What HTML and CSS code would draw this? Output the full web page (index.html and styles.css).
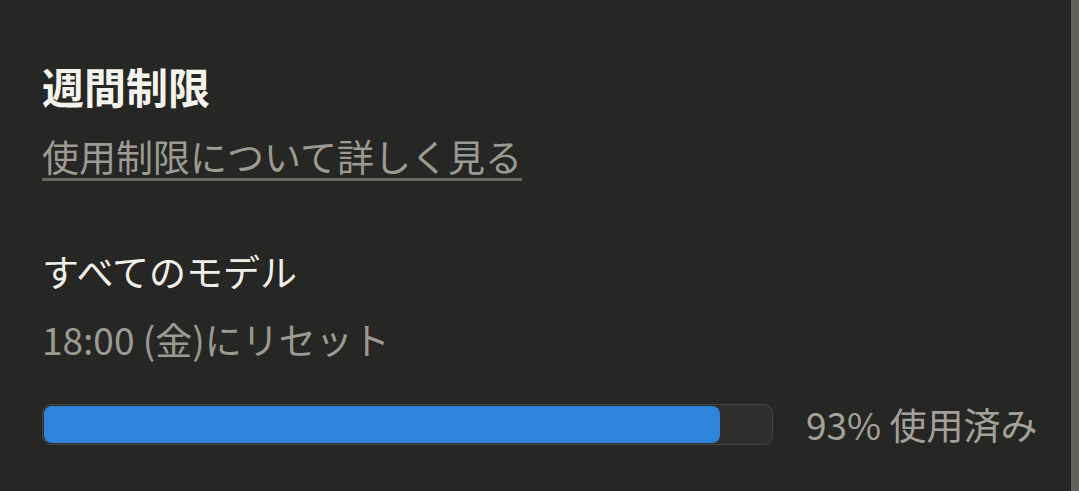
FILE: index.html
```html
<!DOCTYPE html>
<html lang="ja">
<head>
<meta charset="utf-8">
<link rel="stylesheet" href="styles.css">
</head>
<body>
<div class="page">
  <main class="content">
    <section class="section">
      <h2 class="title">週間制限</h2>
      <a class="link" href="#">使用制限について詳しく見る</a>
    </section>
    <section class="usage">
      <div class="model">すべてのモデル</div>
      <div class="reset">18:00 (金)にリセット</div>
      <div class="row">
        <div class="bar"><div class="fill" style="width:93%"></div></div>
        <div class="pct">93% 使用済み</div>
      </div>
    </section>
  </main>
  <div class="scroll"></div>
</div>
</body>
</html>
```
FILE: styles.css
```css
html, body {
  margin: 0;
  padding: 0;
  height: 100%;
  background: #262624;
}
body {
  font-family: "Noto Sans CJK JP", "Noto Sans", sans-serif;
  overflow: hidden;
}
.page {
  display: flex;
  height: 491px;
}
.content {
  flex: 1;
  padding: 60px 34px 0 42px;
  display: flex;
  flex-direction: column;
}
.section {
  display: flex;
  flex-direction: column;
  align-items: flex-start;
}
.title {
  margin: 0;
  font-size: 42px;
  line-height: 52px;
  font-weight: 700;
  color: #f5f4ef;
}
.link {
  margin-top: 23px;
  font-size: 37px;
  line-height: 43px;
  color: #9c9a94;
  text-decoration: none;
  border-bottom: 3px solid #67665f;
}
.usage {
  margin-top: 66px;
  display: flex;
  flex-direction: column;
}
.model {
  font-size: 37px;
  line-height: 48px;
  color: #f0efea;
}
.reset {
  margin-top: 20px;
  font-size: 37px;
  line-height: 48px;
  color: #9c9a94;
}
.row {
  margin-top: 37px;
  display: flex;
  align-items: center;
  gap: 33px;
}
.bar {
  width: 731px;
  height: 41px;
  box-sizing: border-box;
  border: 1.5px solid #454542;
  border-radius: 9px;
  background: #2e2e2c;
  padding: 1px;
}
.fill {
  height: 100%;
  background: #2e84db;
  border-radius: 8px;
}
.pct {
  font-size: 37px;
  line-height: 48px;
  color: #a3a19b;
  white-space: nowrap;
}
.scroll {
  width: 9px;
  flex: none;
  background: #62625c;
}
```
